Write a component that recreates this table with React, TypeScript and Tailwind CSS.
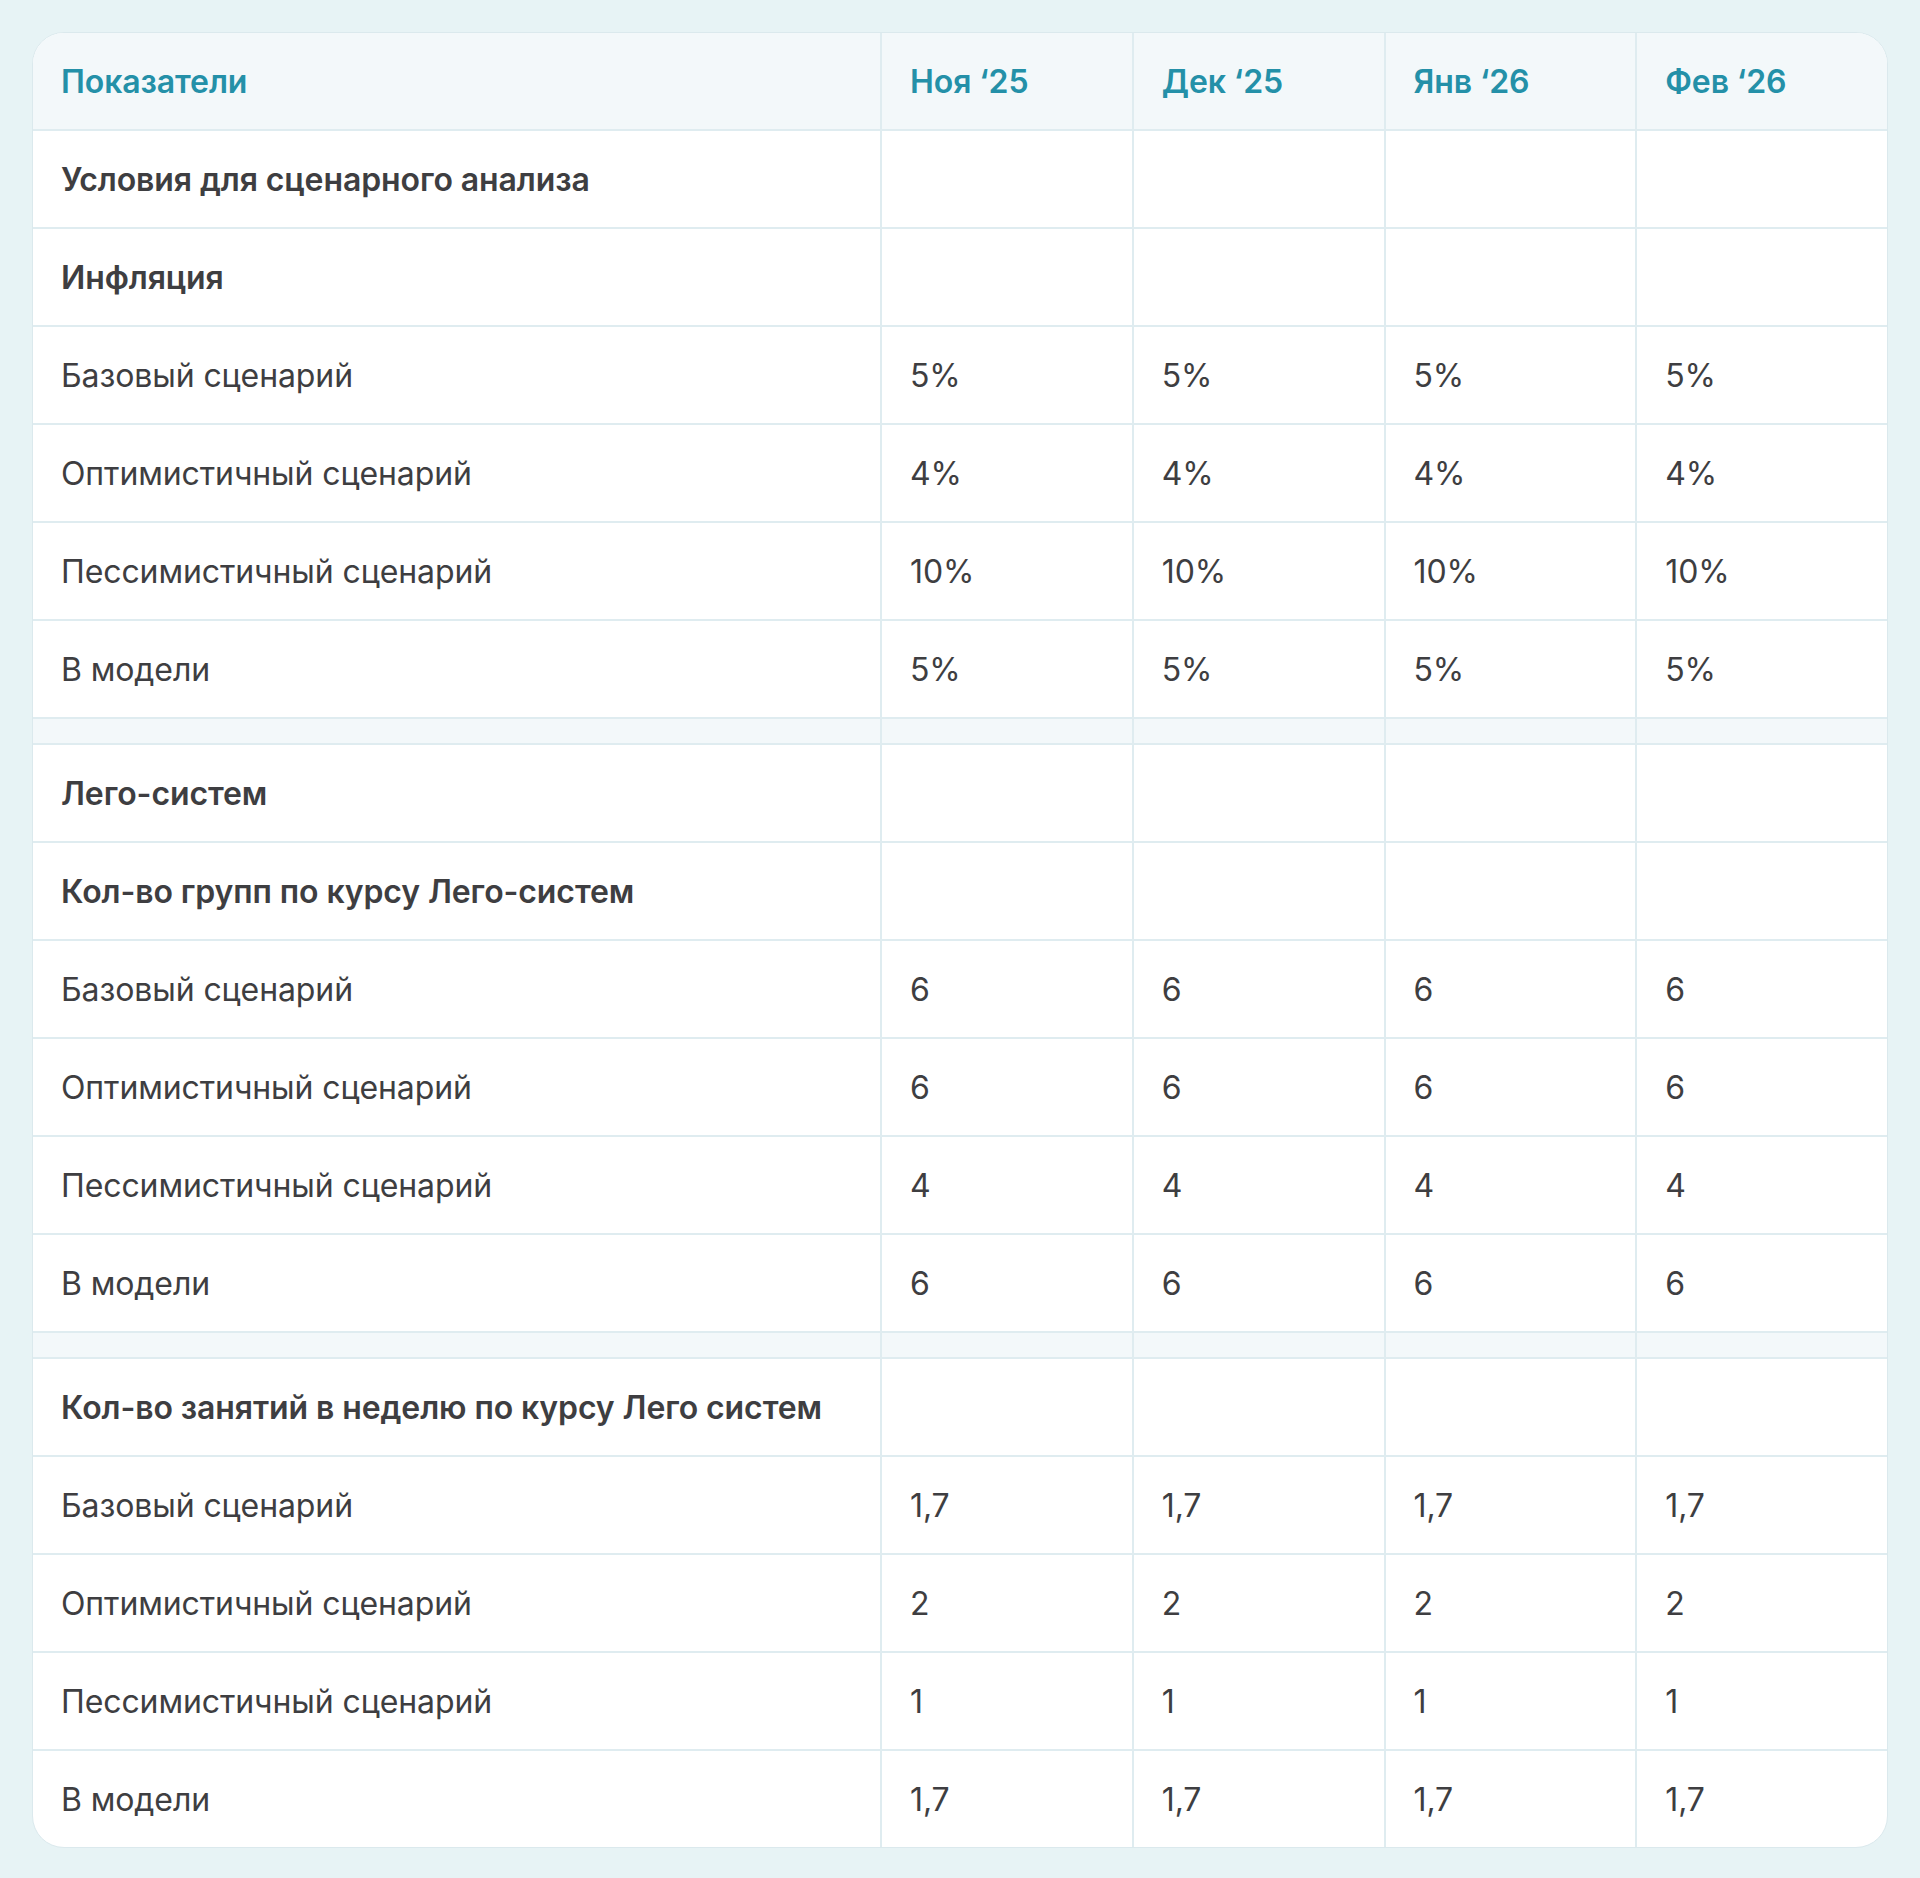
import { Fragment } from 'react';

type Row =
  | { kind: 'title'; label: string }
  | { kind: 'value'; label: string; values: string[] }
  | { kind: 'gap' };

const months = ['Ноя ‘25', 'Дек ‘25', 'Янв ‘26', 'Фев ‘26'];

const same = (v: string) => [v, v, v, v];

const rows: Row[] = [
  { kind: 'title', label: 'Условия для сценарного анализа' },
  { kind: 'title', label: 'Инфляция' },
  { kind: 'value', label: 'Базовый сценарий', values: same('5%') },
  { kind: 'value', label: 'Оптимистичный сценарий', values: same('4%') },
  { kind: 'value', label: 'Пессимистичный сценарий', values: same('10%') },
  { kind: 'value', label: 'В модели', values: same('5%') },
  { kind: 'gap' },
  { kind: 'title', label: 'Лего-систем' },
  { kind: 'title', label: 'Кол-во групп по курсу Лего-систем' },
  { kind: 'value', label: 'Базовый сценарий', values: same('6') },
  { kind: 'value', label: 'Оптимистичный сценарий', values: same('6') },
  { kind: 'value', label: 'Пессимистичный сценарий', values: same('4') },
  { kind: 'value', label: 'В модели', values: same('6') },
  { kind: 'gap' },
  { kind: 'title', label: 'Кол-во занятий в неделю по курсу Лего систем' },
  { kind: 'value', label: 'Базовый сценарий', values: same('1,7') },
  { kind: 'value', label: 'Оптимистичный сценарий', values: same('2') },
  { kind: 'value', label: 'Пессимистичный сценарий', values: same('1') },
  { kind: 'value', label: 'В модели', values: same('1,7') },
];

const grid = 'grid grid-cols-[847px_1fr_1fr_1fr_1fr]';

export default function App() {
  return (
    <div className="min-h-screen bg-[#e7f3f5] p-8 font-['Inter','Noto_Sans',sans-serif] text-[32px] leading-none tracking-[-0.1px]">
      <div className="overflow-hidden rounded-[32px] border border-[#dbe9ed] bg-white">
        {/* header */}
        <div className={`${grid} h-24 bg-[#f3f8fa] font-semibold text-[#2490a8]`}>
          <div className="flex items-center px-7 pt-[2px]">Показатели</div>
          {months.map((m) => (
            <div key={m} className="flex items-center border-l-2 border-[#dfecf0] px-7 pt-[2px]">
              {m}
            </div>
          ))}
        </div>

        {rows.map((row, i) => (
          <Fragment key={i}>
            {row.kind === 'gap' ? (
              <div className={`${grid} h-[26px] border-t-2 border-[#dfecf0] bg-[#f3f8fa]`}>
                <div />
                {months.map((m) => (
                  <div key={m} className="border-l-2 border-[#dfecf0]" />
                ))}
              </div>
            ) : (
              <div className={`${grid} h-[98px] border-t-2 border-[#dfecf0] text-[#3e3e41]`}>
                <div className={`flex items-center px-7 pt-[2px] ${row.kind === 'title' ? 'font-semibold' : ''}`}>
                  {row.label}
                </div>
                {months.map((m, j) => (
                  <div key={m} className="flex items-center border-l-2 border-[#dfecf0] px-7 pt-[2px]">
                    {row.kind === 'value' ? row.values[j] : ''}
                  </div>
                ))}
              </div>
            )}
          </Fragment>
        ))}
      </div>
    </div>
  );
}
